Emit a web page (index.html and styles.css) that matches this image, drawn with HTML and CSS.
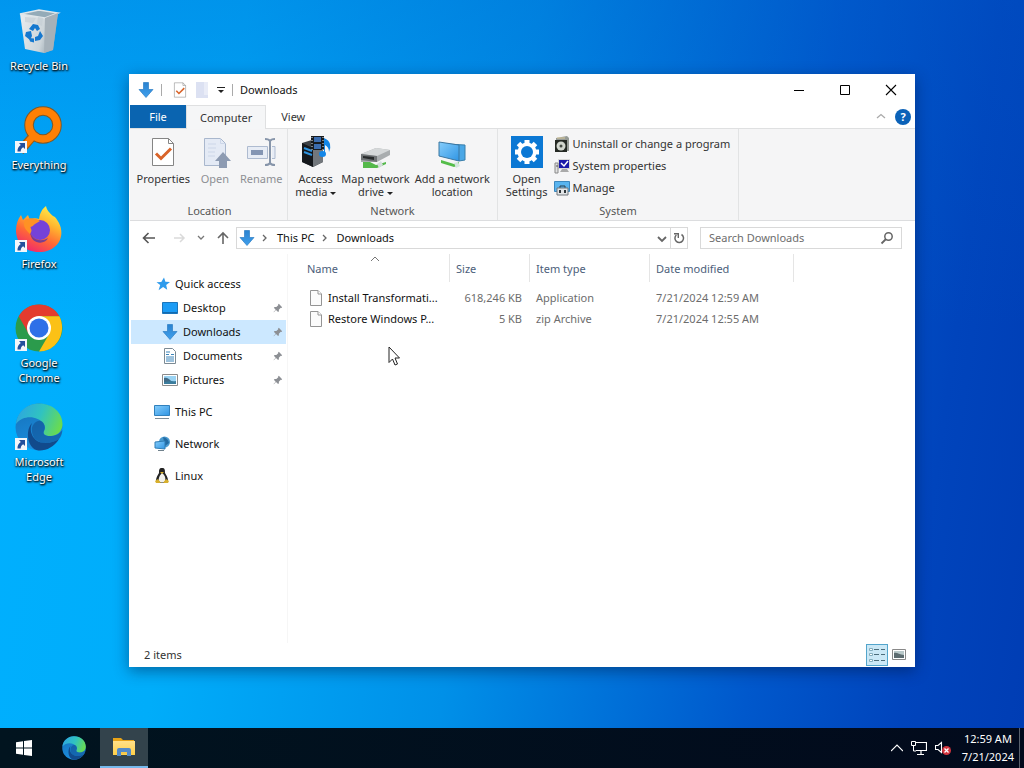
FILE: index.html
```html
<!DOCTYPE html>
<html lang="en">
<head>
<meta charset="utf-8">
<title>Downloads</title>
<link rel="stylesheet" href="styles.css">
</head>
<body>
<svg class="defs" aria-hidden="true">
  <defs>
    <linearGradient id="gBlue" x1="0" y1="0" x2="0" y2="1"><stop offset="0" stop-color="#2b83d0"/><stop offset="1" stop-color="#3f9fec"/></linearGradient>
    <linearGradient id="gScreen" x1="0" y1="0" x2="1" y2="1"><stop offset="0" stop-color="#86cdfb"/><stop offset="1" stop-color="#2f95e4"/></linearGradient>
    <linearGradient id="gEdgeTop" x1="0" y1="0.3" x2="1" y2="0.6"><stop offset="0" stop-color="#2da6e0"/><stop offset="0.5" stop-color="#30c3c0"/><stop offset="1" stop-color="#6bdc4d"/></linearGradient>
    <linearGradient id="gEdgeMid" x1="0" y1="0" x2="0.4" y2="1"><stop offset="0" stop-color="#1570b8"/><stop offset="1" stop-color="#1c8fe0"/></linearGradient>
    <linearGradient id="gFox" x1="0.8" y1="0" x2="0.3" y2="1"><stop offset="0" stop-color="#fff44f"/><stop offset="0.35" stop-color="#ffb52e"/><stop offset="0.65" stop-color="#ff6a35"/><stop offset="1" stop-color="#f0266f"/></linearGradient>
    <linearGradient id="gBin" x1="0" y1="0" x2="1" y2="0.3"><stop offset="0" stop-color="#e9edf0"/><stop offset="0.7" stop-color="#cdd5da"/><stop offset="1" stop-color="#93a3ad"/></linearGradient>
    <linearGradient id="gFolder" x1="0" y1="0" x2="0" y2="1"><stop offset="0" stop-color="#ffe08a"/><stop offset="1" stop-color="#ffcf48"/></linearGradient>
  </defs>
  <symbol id="down" viewBox="0 0 16 16"><path d="M5.500 .5h5v7h4.500L8 15.500 1 7.500h4.500z" fill="url(#gBlue)" stroke="#2b7cc4" stroke-width=".7"/></symbol>
  <symbol id="shortcut" viewBox="0 0 12 12"><path d="M0 0h12v12H0z" fill="#f4f6fa"/><path d="M4 2h6v6L8.200 6.200C6.500 7 5.800 8.400 5.700 10.500H2.500C2.300 7.500 3.500 5.500 5.800 3.900z" fill="#234f9c"/></symbol>
  <symbol id="edge" viewBox="0 0 48 48">
    <circle cx="24" cy="24" r="23.500" fill="url(#gEdgeMid)"/>
    <path d="M1 21C2 9 12 .5 24 .5 38 .5 47.500 10 47.500 21c0 7-5 12-12 12-5 0-8-2-6.500-5 1.500-2 1.500-5-.5-7.500C23 13.500 9 11 1 21z" fill="url(#gEdgeTop)"/>
    <path d="M17 20c-4 9 2 20 13 20 6 0 11-2 14-4C39 44 31 48 23.500 47.500 12 46 10 27 17 20z" fill="#114a8c"/>
    <path d="M29 28c-1.500 3 1 5 6 5 5 0 9-1.500 12.500-6-.5 4-1.500 7-3.500 9-3 2-8 4-14 4-9 0-14-7-13-15 .6-3 4-8 9-7 3 1 5 6 3 10z" fill="#114a8c" opacity=".55"/>
  </symbol>
  <symbol id="pin" viewBox="0 0 12 12"><path d="M7 1l4 4-1 1-.7-.2-2.300 2.300.1 1.800-1 1L3.600 8.400 1 11l-.3-.3 2.500-2.700L1 5.800l1-1 2 .1L6.300 2.600 6 2z" fill="#8c8f94"/></symbol>
  <symbol id="sheet" viewBox="0 0 14 16"><path d="M1.500 .5h7.500l3.500 3.500v11.500h-11z" fill="#fbfbfb" stroke="#949494"/><path d="M9 .5v3.500h3.500" fill="#fff" stroke="#949494"/></symbol>
  <symbol id="checksheet" viewBox="0 0 24 30"><path d="M1.500 1.500h16l5 5v22h-21z" fill="#fff" stroke="#858585"/><path d="M17.500 1.500v5h5" fill="none" stroke="#858585"/><path d="M5 16.500l5 5L20 11.500" fill="none" stroke="#d9642a" stroke-width="3"/></symbol>
  <symbol id="picture" viewBox="0 0 16 12"><path d="M.5.5h15v11H.5z" fill="#fff" stroke="#8b8b8b"/><path d="M2 2h12v8H2z" fill="#9ad3f3"/><path d="M2 7c4-2 6 1 12 0v3H2z" fill="#3b7c9c"/><path d="M2 4c3-1 5 1 7 3L2 8z" fill="#416a86"/></symbol>
</svg>

<main class="desktop">
  <nav class="shortcuts" aria-label="Desktop">
    <a class="shortcut" href="#bin">
      <svg class="shortcut-icon" viewBox="0 0 48 48"><path d="M5 7l19-4 19 3-5 37-9 3-19-4z" fill="url(#gBin)"/><path d="M5 7l19-4 19 3-13 5z" fill="#94abb8" stroke="#dfe6ea" stroke-width="1.500"/><path d="M30 11L43 6l-5 37-9 3z" fill="#a6b1b9"/><path d="M10 10l11 1-3 5-8-1zM23 10l5 1-1 8-5-2z" fill="#c3cdd3" opacity=".6"/><g fill="#1578cf"><path d="M14 22l4-5 5 1 2 4-3 2-2-3-2 3z"/><path d="M11 25l5-1 1 5-2 4-5-4z"/><path d="M25 24l3 5-3 4-5 1v-4l3-1z"/><path d="M14 31l5 .5v4l-4-1z"/></g></svg>
      <span>Recycle Bin</span></a>
    <a class="shortcut" href="#everything">
      <svg class="shortcut-icon" viewBox="0 0 48 48"><path d="M18 30L5 45" stroke="#a05a10" stroke-width="9"/><circle cx="28" cy="19" r="14" fill="none" stroke="#7d5827" stroke-width="9.500"/><circle cx="28" cy="19" r="14" fill="none" stroke="#ff8005" stroke-width="7.500"/><path d="M20 28L6 44" stroke="#ff8005" stroke-width="6.500"/><use href="#shortcut" x="0" y="35" width="12" height="12"/></svg>
      <span>Everything</span></a>
    <a class="shortcut" href="#firefox">
      <svg class="shortcut-icon" viewBox="0 0 48 48"><path d="M6 10l2 5 5-5 2 5c3-2 6-2 9-1 1-6 3-10 7-13 1 5 4 7 7 10 3 1 4 4 6 7 7 14-2 29-20 29C10 47 1 38 1 25c0-6 2-11 5-15z" fill="url(#gFox)"/><circle cx="25" cy="25" r="10" fill="#7542d8"/><path d="M10 15c5-3 11-2 15 1l-5 3c-2 1-1 2-5 3 2 3 2 4 0 7-4-4-8-8-5-14z" fill="#ff9124"/><path d="M15 27c2 7 10 11 18 6-3 7-17 7-18-6z" fill="#5636a5" opacity=".8"/><use href="#shortcut" x="0" y="35" width="12" height="12"/></svg>
      <span>Firefox</span></a>
    <a class="shortcut" href="#chrome">
      <svg class="shortcut-icon" viewBox="0 0 48 48"><circle cx="24" cy="24" r="23.500" fill="#2b9b4c"/><path d="M24 .5c9 0 16.500 4.500 20.400 11.700H24L13.800 30 3.700 12.200C8 5 15 .5 24 .5z" fill="#e33b2e"/><path d="M44.400 12.200C52 27 43 47.500 24 47.500L34.200 30 24 12.200z" fill="#fbc116"/><circle cx="24" cy="24" r="12" fill="#fff"/><circle cx="24" cy="24" r="9.500" fill="#2e70e8"/><use href="#shortcut" x="0" y="35" width="12" height="12"/></svg>
      <span>Google Chrome</span></a>
    <a class="shortcut" href="#edge-browser">
      <svg class="shortcut-icon" viewBox="0 0 48 48"><use href="#edge"/><use href="#shortcut" x="0" y="35" width="12" height="12"/></svg>
      <span>Microsoft Edge</span></a>
  </nav>

  <section class="window" aria-label="Downloads">
    <header class="titlebar">
      <svg class="i16 folder-icon"><use href="#down"/></svg>
      <span class="bar"></span>
      <button class="plain quick" aria-label="Properties"><svg class="i16"><use href="#checksheet"/></svg></button>
      <button class="plain quick" aria-label="New folder"><svg class="i16" viewBox="0 0 16 16"><path d="M2 0h12v16H2z" fill="#dce1f2"/><path d="M10 0h4v13h-4z" fill="#e9ecf7"/></svg></button>
      <button class="plain more" aria-label="Customize toolbar"><svg width="8" height="8" viewBox="0 0 8 8"><path d="M0 1.500h8" stroke="#222"/><path d="M1 4h6L4 7z" fill="#222"/></svg></button>
      <span class="bar"></span>
      <h1>Downloads</h1>
      <div class="window-controls">
        <button class="plain" aria-label="Minimize"><svg width="12" height="12" viewBox="0 0 12 12"><path d="M1 6.500h10" stroke="#000"/></svg></button>
        <button class="plain" aria-label="Maximize"><svg width="12" height="12" viewBox="0 0 12 12"><path d="M1.500 1.500h9v9h-9z" fill="none" stroke="#000"/></svg></button>
        <button class="plain" aria-label="Close"><svg width="12" height="12" viewBox="0 0 12 12"><path d="M1 1l10 10M11 1L1 11" stroke="#000" stroke-width="1.100"/></svg></button>
      </div>
    </header>

    <div class="tabs">
      <button class="plain tab file">File</button>
      <button class="plain tab current">Computer</button>
      <button class="plain tab">View</button>
      <div class="tab-tools">
        <button class="plain" aria-label="Collapse ribbon"><svg width="10" height="10" viewBox="0 0 10 10"><path d="M1 6l4-3.500L9 6" fill="none" stroke="#aaa" stroke-width="1.300"/></svg></button>
        <button class="plain help" aria-label="Help">?</button>
      </div>
    </div>

    <div class="ribbon">
      <section class="group location">
        <div class="tools">
          <button class="plain tool"><svg class="i32" viewBox="0 0 32 32"><use href="#checksheet" x="4" y="1" width="24" height="30"/></svg>Properties</button>
          <button class="plain tool off"><svg class="i32" viewBox="0 0 32 32"><path d="M5.500 2.500h16l5 5v22h-21z" fill="#e4eaf5" stroke="#a9b7cd"/><path d="M21.500 2.500v5h5M9 8h8M9 12h8M9 16h7M9 20h7" fill="none" stroke="#ccd6e8"/><path d="M24 16l8 9h-4v7h-8v-7h-4z" fill="#8d9bb2"/></svg>Open</button>
          <button class="plain tool off"><svg class="i32" viewBox="0 0 32 32"><path d="M2.500 10.500h20v12h-20zM27 10.500h3v12h-3" fill="#e7ecf5" stroke="#aebbd0"/><path d="M6 14h12v5H6z" fill="#8495b3"/><path d="M20 3q4 0 5 2 1-2 5-2M25 4v24M20 29q4 0 5-2 1 2 5 2" fill="none" stroke="#8795aa" stroke-width="2"/></svg>Rename</button>
        </div>
        <h2>Location</h2>
      </section>
      <section class="group network">
        <div class="tools">
          <button class="plain tool"><svg class="i32" viewBox="0 0 32 32"><path d="M2 7l13-4 8 4v19l-10 5-11-5z" fill="#3d4146"/><path d="M13 12l10-3v17l-10 5z" fill="#72777c"/><path d="M2 7l11 5v19L2 26z" fill="#15181c"/><path d="M4 12l8 3M4 16l8 3" stroke="#2d93e0" stroke-width="2"/><path d="M11 0h13v14H11z" fill="#171b20"/><path d="M14 1h7v5h-7zM14 8h7v5h-7z" fill="#3c6db0"/><path d="M12 1v13M23 1v13" stroke="#e2e5e8" stroke-dasharray="1 2"/><path d="M24 19V2q5 2 6 6 1 4-1 8 0-5-4-7v9" fill="#1286e8"/><ellipse cx="22.500" cy="18" rx="3.500" ry="3" fill="#1286e8"/></svg>Access<br>media&nbsp;<span class="caret"></span></button>
          <button class="plain tool"><svg class="i32" viewBox="0 0 32 32"><path d="M4 26h7l6 3 10-3v2l-9 4H4z" fill="#55b94b"/><path d="M2 18l15-6 14 2v5l-13 7H2z" fill="#a9adaf"/><path d="M2 18l15-6 14 2-13 6z" fill="#d5d8d9"/><path d="M2 18l16 2v6L2 24z" fill="#6f7375"/><path d="M4 20l11 1v3L4 22z" fill="#282b2c"/><path d="M18 28l4-3 2 4-4 3z" fill="#d4dedc"/></svg>Map network<br>drive&nbsp;<span class="caret"></span></button>
          <button class="plain tool"><svg class="i32" viewBox="0 0 32 32"><path d="M10 8l19 1v15l-6 1z" fill="#4aa7e6" stroke="#397eaa"/><path d="M3 6l20 3v16L3 20z" fill="url(#gScreen)" stroke="#3b76a0"/><path d="M5 24l13 4 5-2v3l-5 2-13-4z" fill="#54bd49"/><path d="M18 27l4-1 2 4-4 2z" fill="#d5e5df"/></svg>Add a network<br>location</button>
        </div>
        <h2>Network</h2>
      </section>
      <section class="group system">
        <div class="tools">
          <button class="plain tool"><svg class="i32" viewBox="0 0 32 32"><path d="M0 0h32v32H0z" fill="#0b78d4"/><g stroke="#fff" stroke-width="5"><path d="M16 4v24M4 16h24M7.500 7.500l17 17M24.500 7.500l-17 17"/></g><circle cx="16" cy="16" r="9.500" fill="#fff"/><circle cx="16" cy="16" r="6" fill="#0b78d4"/></svg>Open<br>Settings</button>
          <div class="rows">
            <button class="plain row-tool"><svg class="i16" viewBox="0 0 16 16"><path d="M2 2l11-2 2 2v13H2z" fill="#969b96"/><path d="M1 4h12v12H1z" fill="#252924"/><circle cx="7" cy="10" r="4.500" fill="#d2d6ce"/><circle cx="7" cy="10" r="1.500" fill="#454a42"/><path d="M3 2h8" stroke="#d9c898"/></svg>Uninstall or change a program</button>
            <button class="plain row-tool"><svg class="i16" viewBox="0 0 16 16"><path d="M4 1h12v10H4z" fill="#d8d8d8"/><path d="M5 2h10v8H5z" fill="#1b1aa9"/><path d="M7 5l3 3 4-5" fill="none" stroke="#fff" stroke-width="1.500"/><path d="M8 11h5l2 3H6z" fill="#aaa"/><path d="M1 5h3v10H1z" fill="#e1e1e1" stroke="#898989"/><path d="M2 8h2" stroke="#555"/></svg>System properties</button>
            <button class="plain row-tool"><svg class="i16" viewBox="0 0 16 16"><path d="M.5 1.500h15v10H.5z" fill="#59b4ef" stroke="#3c87bd"/><path d="M6 8V6h5v2" stroke="#2d3c48" fill="none"/><path d="M3 8h11v7H3z" fill="#e2e5e7" stroke="#71777c"/><path d="M6 10v3M11 10v3" stroke="#30373b" stroke-width="2"/></svg>Manage</button>
          </div>
        </div>
        <h2>System</h2>
      </section>
    </div>

    <div class="address-row">
      <div class="history">
        <button class="plain" aria-label="Back"><svg class="i16" viewBox="0 0 16 16"><path d="M14 8H3M7.500 3L2.500 8l5 5" fill="none" stroke="#555" stroke-width="1.600"/></svg></button>
        <button class="plain forward" aria-label="Forward" disabled><svg class="i16" viewBox="0 0 16 16"><path d="M3 8h10M9 4l4 4-4 4" fill="none" stroke="#dadada" stroke-width="1.500"/></svg></button>
        <button class="plain recent" aria-label="Recent locations"><svg width="8" height="8" viewBox="0 0 8 8"><path d="M1 2l3 3 3-3" fill="none" stroke="#777" stroke-width="1.300"/></svg></button>
        <button class="plain" aria-label="Up"><svg class="i16" viewBox="0 0 16 16"><path d="M8 14V3M3 8l5-5 5 5" fill="none" stroke="#666" stroke-width="1.600"/></svg></button>
      </div>
      <div class="address">
        <svg class="i16"><use href="#down"/></svg>
        <svg class="chev" viewBox="0 0 6 8"><path d="M1 1l3 3-3 3" fill="none" stroke="#666" stroke-width="1.300"/></svg>
        <a href="#pc">This PC</a>
        <svg class="chev" viewBox="0 0 6 8"><path d="M1 1l3 3-3 3" fill="none" stroke="#666" stroke-width="1.300"/></svg>
        <a href="#downloads">Downloads</a>
        <button class="plain drop" aria-label="Previous locations"><svg width="10" height="10" viewBox="0 0 10 10"><path d="M1 4l4 4 4-4" fill="none" stroke="#666" stroke-width="1.800"/></svg></button>
        <button class="plain refresh" aria-label="Refresh"><svg width="12" height="12" viewBox="0 0 12 12"><path d="M8.500 2.500A4.300 4.300 0 1 1 3.300 3" fill="none" stroke="#666" stroke-width="1.500"/><path d="M1 1.700h4.300V6" fill="none" stroke="#666" stroke-width="1.400"/></svg></button>
      </div>
      <label class="search"><input type="text" placeholder="Search Downloads" aria-label="Search Downloads"><svg width="14" height="14" viewBox="0 0 14 14"><circle cx="8.500" cy="5.500" r="3.700" fill="none" stroke="#666" stroke-width="1.500"/><path d="M6 8l-4.500 4.500" stroke="#666" stroke-width="1.800"/></svg></label>
    </div>

    <div class="content">
      <nav class="tree" aria-label="Folders">
        <a href="#quick"><svg class="i16" viewBox="0 0 16 16"><path d="M9 1.500l1.400 4.200 4.600.3-3.800 2.900 1 4.800-4.100-2.600-4.500 3.200 1.600-5.300L1.500 6.300l4.800-.4z" fill="#2e9bec"/></svg>Quick access</a>
        <a class="child" href="#desktop"><svg class="i16" viewBox="0 0 16 16"><path d="M.5 2.500h15v11H.5z" fill="#1c9cf5" stroke="#1b75bb"/><path d="M1 12.500h14" stroke="#136bb0"/></svg>Desktop<svg class="pin"><use href="#pin"/></svg></a>
        <a class="child selected" href="#downloads" aria-current="page"><svg class="i16"><use href="#down"/></svg>Downloads<svg class="pin"><use href="#pin"/></svg></a>
        <a class="child" href="#documents"><svg class="i16" viewBox="0 0 16 16"><path d="M2.500.5h8l3 3v12h-11z" fill="#fff" stroke="#7c8a94"/><path d="M4 4h4M4 6.500h3M4 9h8M4 11h8M4 13h8M9 6.500h3" stroke="#3b84b9"/></svg>Documents<svg class="pin"><use href="#pin"/></svg></a>
        <a class="child" href="#pictures"><svg class="i16"><use href="#picture"/></svg>Pictures<svg class="pin"><use href="#pin"/></svg></a>
        <a class="root" href="#pc"><svg class="i16" viewBox="0 0 16 16"><path d="M.5 1.500h15v10H.5z" fill="url(#gScreen)" stroke="#3181bd"/><path d="M1 14.500h14" stroke="#7d8d98"/></svg>This PC</a>
        <a class="root" href="#network"><svg class="i16" viewBox="0 0 16 16"><circle cx="10.500" cy="6" r="5.500" fill="#4b9bd0"/><path d="M9 1q5 1 6 6l-4 3" fill="#236ba3"/><path d="M1 6l10-1v8L1 12z" fill="url(#gScreen)" stroke="#2f7db5"/><path d="M4 14.500h6" stroke="#70818c"/></svg>Network</a>
        <a class="root" href="#linux"><svg class="i16" viewBox="0 0 16 16"><path d="M8 0c3 0 3 2 3 5 1 2 3 4 3 8l-2 2H4l-2-2c0-4 2-6 3-8 0-3 0-5 3-5z" fill="#232323"/><path d="M8 5c3 2 4 5 3 8-1 2-5 2-6 0-1-3 1-6 3-8z" fill="#f1f1ec"/><path d="M6 4h4L8 6zM1 13l3-2 3 4H2zM15 13l-3-2-3 4h5z" fill="#d8b02d"/></svg>Linux</a>
      </nav>
      <div class="files">
        <svg class="sort" viewBox="0 0 10 6"><path d="M1 5l4-4 4 4" fill="none" stroke="#777"/></svg>
        <table>
          <colgroup><col class="c-name"><col class="c-size"><col class="c-type"><col class="c-date"></colgroup>
          <thead><tr><th>Name</th><th>Size</th><th>Item type</th><th>Date modified</th></tr></thead>
          <tbody>
            <tr><td class="name"><svg class="file-icon"><use href="#sheet"/></svg>Install Transformati...</td><td class="size">618,246 KB</td><td>Application</td><td>7/21/2024 12:59 AM</td></tr>
            <tr><td class="name"><svg class="file-icon"><use href="#sheet"/></svg>Restore Windows P...</td><td class="size">5 KB</td><td>zip Archive</td><td>7/21/2024 12:55 AM</td></tr>
          </tbody>
        </table>
      </div>
    </div>

    <footer class="status">
      <span>2 items</span>
      <div class="views">
        <button class="plain view on" aria-label="Details view"><svg width="18" height="16" viewBox="0 0 18 16"><path d="M1.500 1.500h3v2h-3zM1.500 6.500h3v2h-3zM1.500 12.500h3v2h-3z" fill="#fff" stroke="#83adbd"/><path d="M6 2.500h5M6 7.500h5M6 13.500h5M13 2.500h4M13 7.500h4M13 13.500h4" stroke="#4c6d7b"/></svg></button>
        <button class="plain view" aria-label="Thumbnail view"><svg width="14" height="12" viewBox="0 0 14 12"><path d="M.5 .5h13v10H.5z" fill="#fff" stroke="#888"/><path d="M2 2h10v7H2z" fill="#b9c9ca"/><path d="M2 4c3-1 5 2 10 2v3H2z" fill="#5c6c70"/></svg></button>
      </div>
    </footer>
  </section>

  <svg class="pointer" viewBox="0 0 12 20"><path d="M1 1v15.500l3.500-3.500 2.500 6 2.500-1L7 12h4.500z" fill="#fff" stroke="#222"/></svg>
</main>

<footer class="taskbar">
  <button class="plain task" aria-label="Start"><svg class="i16" viewBox="0 0 16 16"><path d="M0 2.200l7-1v6.300H0zM8 1l8-1v7.500H8zM0 8.500h7v6.300l-7-1zM8 8.500h8V16l-8-1z" fill="#fff"/></svg></button>
  <button class="plain task" aria-label="Microsoft Edge"><svg width="24" height="24"><use href="#edge"/></svg></button>
  <button class="plain task active" aria-label="File Explorer"><svg width="24" height="20" viewBox="0 0 24 20"><path d="M1 1h8l2 2h11v4H1z" fill="#e8a317"/><path d="M1 4h22v14H1z" fill="url(#gFolder)"/><path d="M5 19v-6q0-2 2-2h10q2 0 2 2v6h-4v-4H9v4z" fill="#5289c8"/><path d="M9 15h6v2H9z" fill="#f4c84d"/></svg></button>
  <div class="tray">
    <svg width="12" height="8" viewBox="0 0 12 8"><path d="M0 7l6-6 6 6" fill="none" stroke="#fff" stroke-width="1.200"/></svg>
    <svg class="i16" viewBox="0 0 16 16"><path d="M5 2.500h10.500v8H5M10 10.500V14M6 14.500h7" fill="none" stroke="#fff" stroke-width="1.200"/><path d="M.500 1.500h4v4h-4zM2.500 5.500V11H5" fill="none" stroke="#fff"/></svg>
    <svg class="i16" viewBox="0 0 16 16"><path d="M.500 5.500H3l3.500-3v10L3 9.500H.5z" fill="none" stroke="#fff" stroke-width="1.100"/><circle cx="11.500" cy="10.500" r="4.500" fill="#d3343d"/><path d="M9.500 8.500l4 4M13.500 8.500l-4 4" stroke="#fff" stroke-width="1.300"/></svg>
  </div>
  <time class="clock" datetime="2024-07-21T00:59">12:59 AM<br>7/21/2024</time>
</footer>
</body>
</html>
```
FILE: styles.css
```css
* { box-sizing: border-box; }

body {
  margin: 0;
  height: 100vh;
  display: grid;
  grid-template-rows: 1fr 40px;
  font: 11px/16px "Noto Sans", "Open Sans", sans-serif;
  color: #111;
  overflow: hidden;
}

h1, h2 { margin: 0; font-size: 11px; font-weight: 400; }
a { color: inherit; text-decoration: none; }
svg { display: block; flex: none; }

.defs { position: absolute; width: 0; height: 0; }
.i16 { width: 16px; height: 16px; }
.i32 { width: 32px; height: 32px; }

.plain {
  display: flex;
  align-items: center;
  justify-content: center;
  padding: 0;
  border: 0;
  background: none;
  font: inherit;
  color: inherit;
}

/* Desktop */
.desktop {
  position: relative;
  background:
    linear-gradient(to bottom, rgba(0, 90, 200, 0.3), rgba(0, 120, 220, 0) 45%),
    linear-gradient(98deg, #00b0ff 0%, #00adfa 22%, #0090e8 48%, #0058cc 75%, #0044bc 89%, #003db4 100%);
}

.shortcuts {
  display: grid;
  grid-auto-rows: 99px;
  justify-content: start;
  grid-template-columns: 78px;
}

.shortcut {
  display: flex;
  flex-direction: column;
  align-items: center;
  gap: 3px;
  padding: 7px 4px 0;
  line-height: 15px;
  text-align: center;
  color: #fff;
  text-shadow: 1px 1px 2px #000, 0 1px 2px #000;
}

.shortcut-icon { width: 48px; height: 48px; }

/* Explorer window */
.window {
  position: absolute;
  inset: 74px 109px 61px 129px;
  display: flex;
  flex-direction: column;
  padding-left: 1px;
  background: #fff;
  box-shadow: 0 4px 14px rgba(0, 20, 60, 0.45);
}

.titlebar {
  display: flex;
  align-items: center;
  height: 31px;
  padding-left: 8px;
}

.folder-icon { margin-right: 3px; }
.bar { width: 1px; height: 12px; margin: 0 7px 0 4px; background: #aaa; }
.quick { width: 22px; }
.more { width: 15px; }
.window-controls { display: flex; align-self: stretch; margin: 0 1px 0 auto; }
.window-controls .plain { width: 46px; }

.tabs { display: flex; height: 24px; border-bottom: 1px solid #dfe0e1; }
.tab { padding: 0 15px; color: #333; }
.tab.file { width: 56px; background: #0a64b0; color: #fff; }
.tab.current {
  padding: 0 13px;
  margin-bottom: -1px;
  background: #f5f6f7;
  border: 1px solid #dfe0e1;
  border-bottom: 0;
}
.tab-tools { display: flex; align-items: center; gap: 9px; margin-left: auto; padding-right: 4px; }
.help { width: 16px; height: 16px; border-radius: 50%; background: #0b62b8; color: #fff; font-weight: 700; }

.ribbon {
  display: flex;
  height: 92px;
  padding-left: 2px;
  background: #f5f5f6;
  border-bottom: 1px solid #dcdddf;
}

.group {
  display: flex;
  flex-direction: column;
  justify-content: space-between;
  padding: 7px 0 1px;
  border-right: 1px solid #e2e3e4;
}
.group h2 { text-align: center; color: #555; line-height: 16px; }
.location { width: 156px; }
.network { width: 210px; }
.system { width: 241px; }

.tools { display: flex; justify-content: center; align-items: flex-start; white-space: nowrap; }
.tool { display: block; line-height: 13px; text-align: center; color: #333; }
.tool svg { margin: 0 auto 4px; }
.location .tools { gap: 9px; }
.network .tools { gap: 5px; }
.tool.off { color: #8d8f94; }
.caret {
  display: inline-block;
  border: 3px solid transparent;
  border-top-color: #222;
  border-bottom: 0;
  vertical-align: middle;
}

.rows { display: grid; grid-auto-rows: 22px; margin: -3px 0 0 6px; }
.row-tool { gap: 3px; justify-content: flex-start; color: #333; }

/* Address row */
.address-row {
  display: flex;
  align-items: center;
  height: 33px;
  padding: 0 13px 0 11px;
}
.history { display: flex; gap: 9px; align-items: center; padding-right: 5px; }
.forward { margin-left: 5px; }
.recent { width: 10px; }
.address {
  flex: 1;
  display: flex;
  align-items: center;
  height: 22px;
  padding-left: 2px;
  border: 1px solid #d9d9d9;
}
.chev { width: 6px; height: 8px; margin: 0 9px 0 7px; }
.drop { margin-left: auto; width: 16px; }
.refresh { align-self: stretch; width: 17px; border-left: 1px solid #d9d9d9; }
.search {
  display: flex;
  align-items: center;
  width: 202px;
  height: 22px;
  margin-left: 12px;
  padding: 0 7px 0 8px;
  border: 1px solid #d9d9d9;
}
.search input { flex: 1; min-width: 0; padding: 0; border: 0; outline: 0; background: none; font: inherit; }
.search input::placeholder { color: #6d6d6d; opacity: 1; }

/* Folder tree and file list */
.content { flex: 1; display: flex; min-height: 0; }
.tree {
  width: 158px;
  padding: 18px 1px 0;
  border-right: 1px solid #f6f6f6;
}
.tree a { display: flex; align-items: center; gap: 4px; height: 24px; padding-left: 24px; }
.tree .child { gap: 5px; padding-left: 31px; }
.tree .selected { background: #cce8ff; }
.tree .root { margin-top: 8px; padding-left: 23px; gap: 5px; }
.tree .pin { width: 10px; height: 10px; margin: 0 3px 0 auto; }

.files { position: relative; flex: 1; min-width: 0; }
.sort { position: absolute; top: 2px; left: 82px; width: 10px; height: 6px; }
table { table-layout: fixed; width: 506px; border-collapse: separate; border-spacing: 0; white-space: nowrap; }
.c-name { width: 162px; }
.c-size { width: 80px; }
.c-type { width: 120px; }
.c-date { width: 144px; }
th { height: 28px; padding: 2px 0 0 6px; border-right: 1px solid #e5e5e5; text-align: left; font-weight: 400; color: #4c607a; }
th:first-child { padding-left: 19px; }
td { height: 21px; padding: 0 0 0 6px; color: #6d6d6d; }
tbody::before { content: ""; display: block; height: 5px; }
td.name { display: flex; align-items: center; gap: 5px; padding-left: 21px; color: #111; }
td.size { padding-right: 8px; text-align: right; }
.file-icon { width: 14px; height: 16px; }

.status { display: flex; align-items: center; justify-content: space-between; height: 24px; padding-left: 14px; color: #333; }
.views { display: flex; padding-right: 5px; }
.view { width: 22px; height: 22px; border: 1px solid transparent; }
.view.on { background: #cbe8f6; border-color: #53a5cc; }

.pointer { position: absolute; left: 388px; top: 346px; width: 12px; height: 20px; }

/* Taskbar */
.taskbar { display: flex; gap: 2px; background: linear-gradient(to right, #01141f, #020a1c); color: #fff; }
.task { width: 48px; }
.task.active { background: #33434c; border-bottom: 2px solid #76b9ed; }
.tray { display: flex; align-items: center; gap: 8px; margin-left: auto; padding-right: 9px; }
.clock {
  align-self: stretch;
  padding: 2px 5px 0 0;
  margin-right: 4px;
  border-right: 1px solid #59616c;
  line-height: 18px;
  text-align: center;
}
```
